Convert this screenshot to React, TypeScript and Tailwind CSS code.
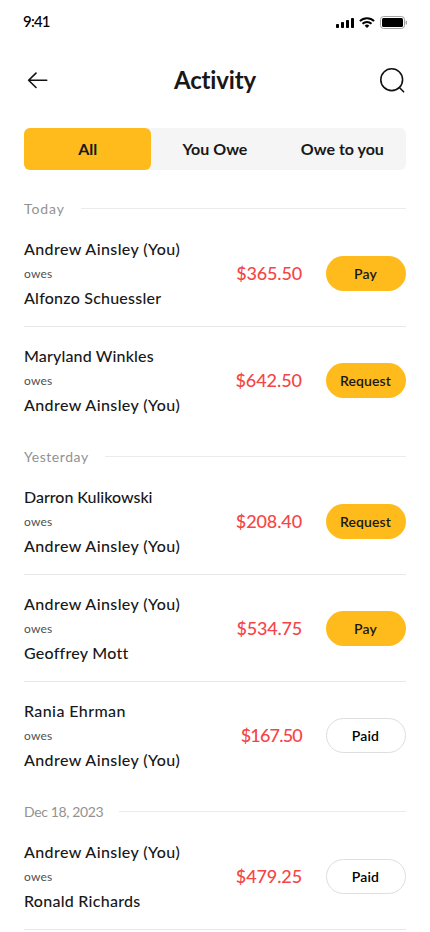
import React from 'react';
import clsx from 'clsx';

type Action = 'Pay' | 'Request' | 'Paid';

interface Entry {
  from: string;
  to: string;
  amount: string;
  action: Action;
}

interface Section {
  label: string;
  entries: Entry[];
}

const ME = 'Andrew Ainsley (You)';

const sections: Section[] = [
  {
    label: 'Today',
    entries: [
      { from: ME, to: 'Alfonzo Schuessler', amount: '$365.50', action: 'Pay' },
      { from: 'Maryland Winkles', to: ME, amount: '$642.50', action: 'Request' },
    ],
  },
  {
    label: 'Yesterday',
    entries: [
      { from: 'Darron Kulikowski', to: ME, amount: '$208.40', action: 'Request' },
      { from: ME, to: 'Geoffrey Mott', amount: '$534.75', action: 'Pay' },
      { from: 'Rania Ehrman', to: ME, amount: '$167.50', action: 'Paid' },
    ],
  },
  {
    label: 'Dec 18, 2023',
    entries: [
      { from: ME, to: 'Ronald Richards', amount: '$479.25', action: 'Paid' },
    ],
  },
];

const tabs = ['All', 'You Owe', 'Owe to you'];

const tracking: Record<string, string> = {
  'Alfonzo Schuessler': 'tracking-[0.23px]',
  'Maryland Winkles': 'tracking-[0.15px]',
  'Darron Kulikowski': 'tracking-[-0.02px]',
  'Geoffrey Mott': 'tracking-[0.25px]',
  'Ronald Richards': 'tracking-[0.27px]',
  Today: 'tracking-[0.9px]',
  Yesterday: 'tracking-[0.55px]',
  'Dec 18, 2023': 'tracking-[-0.36px]',
  '$365.50': 'tracking-[-0.15px]',
  '$642.50': 'tracking-[-0.05px]',
  '$208.40': 'tracking-[-0.1px]',
  '$534.75': 'tracking-[-0.2px]',
  '$167.50': 'tracking-[-0.8px]',
  '$479.25': 'tracking-[-0.1px]',
};

function StatusBar() {
  return (
    <div className="flex h-11 items-center justify-between pr-[23px] pl-[23px]">
      <span className="-mt-px text-[15px] font-medium tracking-[-0.8px] text-black">9:41</span>
      <div className="flex items-center gap-[5px]">
        <svg width="18" height="11" viewBox="0 0 18 11" fill="#000">
          <rect x="0" y="7" width="3" height="4" rx="0.8" />
          <rect x="5" y="5" width="3" height="6" rx="0.8" />
          <rect x="10" y="3" width="3" height="8" rx="0.8" />
          <rect x="15" y="1" width="3" height="10" rx="0.8" />
        </svg>
        <svg width="16" height="11" viewBox="0 0 16 11" fill="none" stroke="#000" strokeWidth="1.9">
          <path d="M0.9 4.1a10.1 10.1 0 0 1 14.2 0" />
          <path d="M3.5 6.8a6.4 6.4 0 0 1 9 0" />
          <path d="M8 10.9 5.7 8.7a3.3 3.3 0 0 1 4.6 0Z" fill="#000" stroke="none" />
        </svg>
        <svg className="-ml-px" width="28" height="13" viewBox="0 0 28 13">
          <rect x="1.5" y="0.5" width="24" height="12" rx="3" fill="none" stroke="#a3a3a3" />
          <rect x="3" y="2" width="21" height="9" rx="1.5" fill="#000" />
          <path d="M26.6 4.6v4a2 2 0 0 0 0-4Z" fill="#a3a3a3" />
        </svg>
      </div>
    </div>
  );
}

function Header() {
  return (
    <div className="flex h-[72px] items-center justify-between px-6">
      <svg width="28" height="28" viewBox="0 0 28 28" fill="none" stroke="#111" strokeWidth="1.6" strokeLinecap="round" strokeLinejoin="round">
        <path d="M22.7 14.3H4.6M12 7.1 4.6 14.3l7.4 7.2" />
      </svg>
      <h1 className="text-2xl font-bold tracking-[-0.15px] text-[#181818]">Activity</h1>
      <svg width="28" height="28" viewBox="0 0 28 28" fill="none" stroke="#111" strokeWidth="1.6" strokeLinecap="round">
        <circle cx="13.7" cy="13.7" r="10.9" />
        <path d="m21.6 21.8 4 4" />
      </svg>
    </div>
  );
}

function Tabs() {
  return (
    <div className="mx-6 mt-3 grid h-[42px] grid-cols-3 rounded-md bg-[#f5f5f5]">
      {tabs.map((tab, i) => (
        <button
          key={tab}
          className={clsx(
            'rounded-md text-base font-bold text-[#181818]',
            i === 0 && 'bg-[#ffbb1c]'
          )}
        >
          {tab}
        </button>
      ))}
    </div>
  );
}

function ActionButton({ action }: { action: Action }) {
  return (
    <button
      className={clsx(
        'h-[35px] w-20 rounded-full text-sm font-semibold',
        action === 'Request' ? 'pr-px tracking-[0.1px]' : 'pr-px tracking-[0.15px]',
        action === 'Paid' ? 'border border-[#dedede] bg-white text-black' : 'bg-[#ffbb1c] text-[#181818]'
      )}
    >
      {action}
    </button>
  );
}

function Name({ children }: { children: string }) {
  return (
    <p className={clsx('text-base leading-6 font-medium', tracking[children] ?? 'tracking-[0.4px]')}>
      {children}
    </p>
  );
}

function EntryRow({ entry }: { entry: Entry }) {
  return (
    <div className="flex items-center">
      <div className="flex-1 whitespace-nowrap text-[#181818]">
        <Name>{entry.from}</Name>
        <p className="text-xs leading-[25px] tracking-[0.2px] text-[#505050]">owes</p>
        <Name>{entry.to}</Name>
      </div>
      <span className={clsx('mr-6 mb-px text-lg font-medium text-[#f54545]', tracking[entry.amount])}>
        {entry.amount}
      </span>
      <ActionButton action={entry.action} />
    </div>
  );
}

export default function App() {
  return (
    <div className="h-[932px] w-[430px] overflow-hidden bg-white font-['Lato',sans-serif]">
      <StatusBar />
      <Header />
      <Tabs />
      <div className="flex flex-col gap-7 px-6 pt-[27px]">
        {sections.map((section, s) => (
          <section key={section.label}>
            <div className="mb-4 flex items-center gap-4">
              <h2 className={clsx('text-sm leading-6 text-[#929292]', tracking[section.label])}>{section.label}</h2>
              <div className="mb-px h-px flex-1 bg-[#ebebeb]" />
            </div>
            {section.entries.map((entry, i) => {
              // the last section carries on below the fold, so its divider stays
              const divided = i < section.entries.length - 1 || s === sections.length - 1;
              return (
                <div
                  key={i}
                  className={clsx(i > 0 && 'pt-[17px]', divided && 'border-b border-[#e8e8e8] pb-4')}
                >
                  <EntryRow entry={entry} />
                </div>
              );
            })}
          </section>
        ))}
      </div>
    </div>
  );
}
